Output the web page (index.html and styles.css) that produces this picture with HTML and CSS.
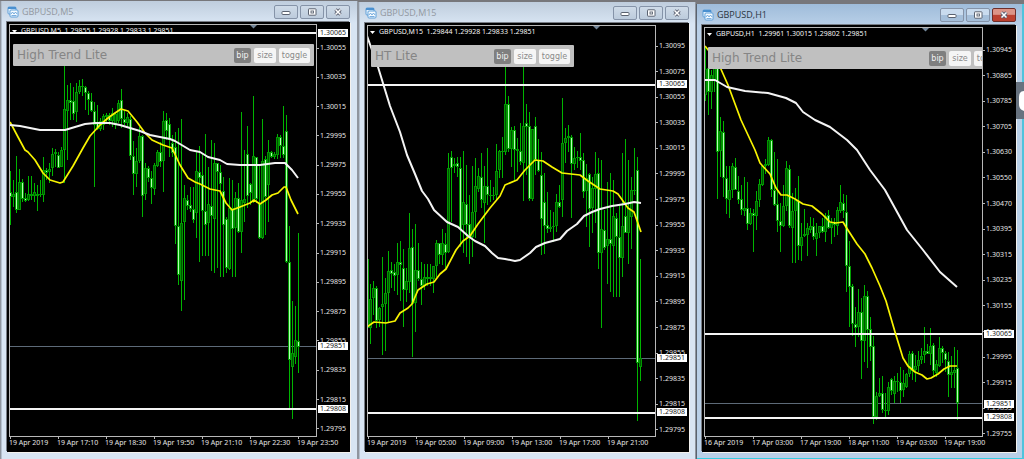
FILE: index.html
```html
<!DOCTYPE html>
<html lang="en">
<head>
<meta charset="utf-8">
<title>GBPUSD charts</title>
<link rel="stylesheet" href="styles.css">
</head>
<body>
<svg class="defs" aria-hidden="true">
  <symbol id="i-chart" viewBox="0 0 12 12">
    <rect x="1" y="1" width="8" height="7" rx="1" fill="#e8f4ff" stroke="#5f9fd8"/>
    <path d="M1 2h8" stroke="#4a90d0" stroke-width="2"/>
    <rect x="3" y="4" width="8" height="7" rx="1" fill="#f4faff" stroke="#5f9fd8"/>
    <path d="M4 8l1.5-2L7 8l1.500-2L10 8M4.500 9.500h5" fill="none" stroke="#5a9ad6" stroke-width=".8"/>
  </symbol>
  <symbol id="i-min" viewBox="0 0 10 8"><rect x="1" y="3.500" width="8" height="3" rx=".8" fill="#fff" stroke="#5a6270"/></symbol>
  <symbol id="i-max" viewBox="0 0 10 8"><rect x="1.500" y=".8" width="7.500" height="6.400" rx=".6" fill="#fff" stroke="#5a6270"/><rect x="4" y="3" width="2.500" height="2" fill="#fff" stroke="#5a6270" stroke-width=".9"/></symbol>
  <symbol id="i-close" viewBox="0 0 10 8"><path d="M2.500 1.500l5 5m0-5l-5 5" stroke="#5a5f70" stroke-width="3.200"/><path d="M2.500 1.500l5 5m0-5l-5 5" stroke="#fff" stroke-width="1.500"/></symbol>
</svg>
<main class="desktop">
  <section class="window">
    <header class="titlebar">
      <svg class="app-icon"><use href="#i-chart"/></svg>
      <h2 class="title">GBPUSD,M5</h2>
      <button class="win-btn" aria-label="Minimize"><svg><use href="#i-min"/></svg></button>
      <button class="win-btn" aria-label="Maximize"><svg><use href="#i-max"/></svg></button>
      <button class="win-btn" aria-label="Close"><svg><use href="#i-close"/></svg></button>
    </header>
    <div class="chart">
      <div class="plot">
        <p class="quote">GBPUSD,M5&nbsp; 1.29855 1.29928 1.29833 1.29851</p>
        <svg class="canvas" id="m5" viewBox="10 25 306 411" preserveAspectRatio="none"></svg>
        <div class="panel">
          <span class="panel-name">High Trend Lite</span>
          <button class="chip chip-on">bip</button><button class="chip">size</button><button class="chip chip-wide">toggle</button>
        </div>
      </div>
      <div class="prices prices-m5">
        <span>1.30055</span><span>1.30035</span><span>1.30015</span><span>1.29995</span><span>1.29975</span><span>1.29955</span><span>1.29935</span><span>1.29915</span><span>1.29895</span><span>1.29875</span><span>1.29855</span><span>1.29835</span><span>1.29815</span><span>1.29795</span>
        <b class="tag" style="top:5px">1.30065</b><b class="tag" style="top:318px">1.29851</b><b class="tag" style="top:381px">1.29808</b>
      </div>
      <div class="times"><span>19 Apr 2019</span><span>19 Apr 17:10</span><span>19 Apr 18:30</span><span>19 Apr 19:50</span><span>19 Apr 21:10</span><span>19 Apr 22:30</span><span>19 Apr 23:50</span></div>
    </div>
  </section>

  <section class="window window-mid">
    <header class="titlebar">
      <svg class="app-icon"><use href="#i-chart"/></svg>
      <h2 class="title">GBPUSD,M15</h2>
      <button class="win-btn" aria-label="Minimize"><svg><use href="#i-min"/></svg></button>
      <button class="win-btn" aria-label="Maximize"><svg><use href="#i-max"/></svg></button>
      <button class="win-btn" aria-label="Close"><svg><use href="#i-close"/></svg></button>
    </header>
    <div class="chart">
      <div class="plot">
        <p class="quote">GBPUSD,M15&nbsp; 1.29844 1.29928 1.29833 1.29851</p>
        <svg class="canvas" id="m15" viewBox="368 26 287 410" preserveAspectRatio="none"></svg>
        <div class="panel panel-short">
          <span class="panel-name">HT Lite</span>
          <button class="chip chip-on">bip</button><button class="chip">size</button><button class="chip chip-wide">toggle</button>
        </div>
      </div>
      <div class="prices prices-m15">
        <span>1.30095</span><span>1.30075</span><span>1.30055</span><span>1.30035</span><span>1.30015</span><span>1.29995</span><span>1.29975</span><span>1.29955</span><span>1.29935</span><span>1.29915</span><span>1.29895</span><span>1.29875</span><span>1.29855</span><span>1.29835</span><span>1.29815</span><span>1.29795</span>
        <b class="tag" style="top:55px">1.30065</b><b class="tag" style="top:329px">1.29851</b><b class="tag" style="top:383px">1.29808</b>
      </div>
      <div class="times"><span>19 Apr 2019</span><span>19 Apr 05:00</span><span>19 Apr 09:00</span><span>19 Apr 13:00</span><span>19 Apr 17:00</span><span>19 Apr 21:00</span></div>
    </div>
  </section>

  <section class="window window-active">
    <header class="titlebar">
      <svg class="app-icon"><use href="#i-chart"/></svg>
      <h2 class="title">GBPUSD,H1</h2>
      <button class="win-btn" aria-label="Minimize"><svg><use href="#i-min"/></svg></button>
      <button class="win-btn" aria-label="Maximize"><svg><use href="#i-max"/></svg></button>
      <button class="win-btn win-close" aria-label="Close"><svg><use href="#i-close"/></svg></button>
    </header>
    <div class="chart">
      <div class="plot">
        <p class="quote">GBPUSD,H1&nbsp; 1.29961 1.30015 1.29802 1.29851</p>
        <svg class="canvas" id="h1" viewBox="705 28 277 408" preserveAspectRatio="none"></svg>
        <div class="panel">
          <span class="panel-name">High Trend Lite</span>
          <button class="chip chip-on">bip</button><button class="chip">size</button><button class="chip chip-wide">toggle</button>
        </div>
      </div>
      <div class="prices prices-h1">
        <span>1.30945</span><span>1.30865</span><span>1.30785</span><span>1.30705</span><span>1.30630</span><span>1.30550</span><span>1.30470</span><span>1.30395</span><span>1.30315</span><span>1.30235</span><span>1.30155</span><span>1.30075</span><span>1.29995</span><span>1.29915</span><span>1.29835</span><span>1.29755</span>
        <b class="tag" style="top:303px">1.30065</b><b class="tag" style="top:373px">1.29851</b><b class="tag" style="top:386px">1.29808</b>
      </div>
      <div class="times"><span>16 Apr 2019</span><span>17 Apr 03:00</span><span>17 Apr 19:00</span><span>18 Apr 11:00</span><span>19 Apr 03:00</span><span>19 Apr 19:00</span></div>
    </div>
    <button class="side-tab" aria-label="Open side panel"><svg viewBox="0 0 8 37"><path d="M8 9C4 9 3 12 3 16v6c0 4 2 6 5 7z" fill="#fff"/></svg></button>
  </section>
</main>
<script src="charts.js"></script>
</body>
</html>
```
FILE: styles.css
```css
* { box-sizing: border-box; }
body {
  margin: 0;
  background: #c9d9ea;
  font-family: "Noto Sans", "Open Sans", sans-serif;
}
.defs { position: absolute; width: 0; height: 0; }
.desktop {
  display: grid;
  grid-template-columns: 358fr 338fr 328fr;
  min-height: 100vh;
  background: #77777b;
}
.window {
  display: flex;
  flex-direction: column;
  padding: 0 8px 7px 7px;
  border-top: 1px solid #77777b;
  background: linear-gradient(#bfcddd, #d8e5f3 22px);
  box-shadow: inset 1px 0 #8f959e, inset 2px 0 #b4c0ce, inset -1px 0 #8f959e;
}
.window-mid { margin-top: 1px; padding-right: 7px; }
.window-active {
  position: relative;
  margin-top: 3px;
  padding-left: 6px;
  background: linear-gradient(#9fbcda, #b9d0e8 22px);
  box-shadow: inset 1px 0 #59626e, inset -2px 0 #4fc3dc, inset 0 -1px #35cfe4;
}
.titlebar {
  display: flex;
  align-items: center;
  height: 21px;
  gap: 2px;
}
.app-icon { width: 12px; height: 12px; }
.title {
  flex: 1;
  margin: 0;
  padding-left: 1px;
  color: #9298a1;
  font: 400 9px/14px "Open Sans", sans-serif;
}
.window-active .title { color: #2c3540; }
.win-btn {
  display: flex;
  align-items: center;
  justify-content: center;
  width: 24px;
  height: 14px;
  padding: 0;
  border: 1px solid #8593a8;
  border-radius: 2px;
  background: linear-gradient(#cfdbe8, #bccbdc);
}
.win-btn svg { width: 10px; height: 8px; }
.window-active .win-btn { background: linear-gradient(#c9dbee 50%, #a5bfda 50%); }
.window-active .win-close { border-color: #6e2f2b; background: linear-gradient(#dc9487 45%, #bc4130 50%); }

.chart {
  flex: 1;
  display: grid;
  grid-template: minmax(0, 1fr) 15px / minmax(0, 1fr) 33px;
  padding: 2px 0 0 2px;
  background: #000;
  box-shadow: -1px -1px #777c84, 1px 1px #f3f1ee;
  color: #e4e4e4;
  font-size: 7px;
  line-height: 8px;
}
.plot {
  position: relative;
  overflow: hidden;
  min-height: 408px;
  border: 1px solid #b8b8b8;
}
.quote {
  position: absolute;
  top: 1px;
  left: 11px;
  margin: 0;
  line-height: 10px;
  white-space: nowrap;
  color: #f4f4f4;
}
.canvas {
  position: absolute;
  inset: 0;
  width: 100%;
  height: 100%;
}
.canvas rect { shape-rendering: crispEdges; }
.panel {
  position: absolute;
  top: 19px;
  left: 3px;
  display: flex;
  align-items: center;
  gap: 3px;
  width: 301px;
  height: 22px;
  padding: 0 4px;
  border-radius: 1px;
  background: #c0c0c0;
  font-family: "DejaVu Sans", sans-serif;
}
.panel-short { width: 203px; }
.panel-name { flex: 1; color: #858585; font-size: 12px; line-height: 16px; }
.chip {
  width: 22px;
  height: 15px;
  padding: 0;
  border: 0;
  border-radius: 2px;
  background: #f5f5f5;
  color: #8a8a8a;
  font: 8px/15px "DejaVu Sans", sans-serif;
}
.chip-on { width: 17px; background: #7f7f7f; color: #f2f2f2; }
.chip-wide { width: 31px; }

.prices {
  position: relative;
  grid-row: 1 / 3;
  grid-column: 2;
  display: flex;
  flex-direction: column;
  justify-content: space-between;
}
.prices-m5 { padding: 20px 0 19px; }
.prices-m15 { padding: 17px 0 18px; }
.prices-h1 { padding: 19px 0 14px; }
.prices span { display: flex; align-items: center; gap: 1px; }
.prices span::before { content: ""; width: 2px; height: 1px; background: #b8b8b8; }
.tag {
  position: absolute;
  left: 1px;
  right: 2px;
  padding-left: 2px;
  background: #fff;
  color: #222;
  font-weight: 400;
  line-height: 8px;
}
.times { display: flex; grid-row: 2; grid-column: 1 / 3; white-space: nowrap; }
.times span { flex: 0 0 48px; padding-top: 1px; }
.times span:last-child { flex: 0 0 auto; }
.times span::before { content: ""; display: block; width: 1px; height: 2px; margin: -1px 0 0 1px; background: #b8b8b8; }
.side-tab {
  position: absolute;
  top: 78px;
  right: 0;
  width: 8px;
  height: 37px;
  padding: 0;
  border: 0;
  background: #67727f;
}
.side-tab svg { display: block; width: 8px; height: 37px; }
```
FILE: charts.js
```js
// Each candle is "high low open close" in canvas units, one every 3 units.
const charts = {
  m5: {
    x: 10, left: 10, right: 316, top: 25, menu: 31, marker: 253,
    levels: [32, 408], bid: 346,
    slow: "10,125 20,126 30,128 40,130 65,130 75,127 85,124 95,123 110,123 120,125 130,128 140,131 150,135 160,137 170,139 175,141 180,144 190,150 200,152 208,157 220,160 227,164 240,165 260,165 275,163 285,163 292,170 298,178",
    fast: "10,122 18,137 25,150 28,152 35,160 43,173 50,180 60,183 63,182 73,166 83,148 90,136 100,125 108,118 115,113 121,109 128,111 137,122 145,133 152,140 163,145 172,148 180,165 188,178 195,182 200,184 210,189 220,191 226,203 232,210 240,207 250,203 254,200 260,204 266,200 272,195 278,193 284,187 286,187 291,200 298,214",
    candles: "171 225 192 197,180 207 197 194,156 213 192 210,169 210 210 182,179 202 182 199,193 202 198 201,176 201 200 194,176 200 194 196,183 202 196 192,185 211 194 196,180 197 195 194,157 202 195 170,168 180 170 173,163 183 172 169,148 176 168 154,149 167 154 152,152 168 155 168,147 167 167 150,66 183 150 109,85 160 111 100,83 120 100 103,87 120 101 114,83 122 112 92,80 94 92 86,79 96 86 87,86 110 87 93,91 115 93 100,93 112 101 111,102 187 111 125,105 130 123 129,118 131 129 121,114 130 125 116,113 123 117 115,113 125 115 121,108 127 121 113,112 129 125 114,100 123 121 103,89 128 100 119,110 125 119 123,113 128 123 117,116 160 119 156,141 195 156 174,148 187 174 161,127 163 161 136,135 217 136 196,163 200 194 168,166 182 168 178,171 204 178 188,163 195 189 165,150 167 166 152,142 167 152 162,111 192 161 121,113 140 120 131,118 157 124 140,135 157 143 153,132 244 147 226,128 285 226 275,119 311 281 223,185 300 222 198,195 210 200 206,187 212 205 209,187 223 209 220,152 238 213 171,146 262 172 178,153 256 175 211,134 256 211 225,167 256 223 204,140 271 206 216,143 273 219 163,163 268 163 172,165 277 172 184,177 277 191 225,217 273 219 268,178 270 269 208,180 277 208 229,192 277 228 198,183 233 198 232,112 253 232 200,150 222 203 199,126 208 154 196,183 205 184 193,96 203 201 156,157 203 157 199,165 239 203 238,119 239 238 161,156 235 159 197,140 222 185 152,151 158 152 157,152 159 157 154,134 159 155 137,135 158 137 146,106 158 146 155,115 263 131 262,226 408 262 360,301 419 367 353,306 364 357 340,233 373 341 347"
  },
  m15: {
    x: 367, left: 368, right: 655, top: 26, menu: 32, marker: 596,
    levels: [84, 412], bid: 358,
    slow: "367,36 378,67 390,106 400,132 407,155 415,174 422,191 428,199 434,210 447,222 458,227 468,236 475,241 485,246 492,253 498,258 505,259 515,261 520,260 530,253 536,247 545,243 560,239 567,231 577,224 584,216 592,212 600,209 612,206 625,204 634,202 641,203",
    fast: "367,327 374,322 386,323 395,321 400,313 408,308 412,304 418,290 427,284 434,282 440,274 446,269 456,250 463,241 470,236 478,224 490,208 500,196 505,185 517,180 525,170 535,160 543,161 552,167 562,173 580,175 588,181 600,189 613,191 618,194 628,208 634,212 641,232",
    candles: "259 328 259 328,284 344 328 299,281 315 298 288,286 328 288 321,307 327 320 308,257 355 307 304,278 351 304 293,251 323 293 271,262 288 270 274,264 291 272 276,243 295 275 262,241 301 262 265,249 327 268 290,268 302 290 281,213 293 282 248,229 357 247 304,224 332 303 270,243 281 270 279,262 305 279 286,264 290 286 277,264 286 277 279,264 286 279 277,266 293 279 266,240 277 266 243,243 264 243 255,229 265 255 243,233 270 244 253,153 253 252 168,151 222 157 168,158 173 166 164,157 177 163 167,157 247 168 229,151 253 225 202,165 257 204 225,195 264 224 237,166 257 237 212,158 238 212 186,168 192 189 176,153 208 177 200,166 243 203 186,148 205 186 195,180 202 195 196,187 200 196 195,144 200 195 171,150 178 170 151,137 178 152 151,67 155 152 104,96 152 104 149,127 167 149 130,126 181 130 150,138 172 149 151,123 165 151 162,67 201 163 126,104 175 123 127,112 201 126 199,129 201 199 129,117 175 126 160,139 172 160 171,152 255 175 219,173 254 202 226,192 233 225 229,210 232 229 227,212 242 227 226,194 232 226 202,185 208 202 207,98 217 200 143,128 163 143 138,125 152 136 138,135 218 137 164,147 170 164 158,151 168 158 157,133 170 157 161,153 198 160 192,164 227 191 178,173 247 174 209,177 233 208 188,152 223 189 174,158 269 173 253,160 328 253 229,210 250 230 248,182 284 246 239,173 292 239 244,180 297 246 216,213 297 218 237,205 297 237 258,153 277 258 226,139 233 216 233,160 264 233 208,177 249 217 190,148 195 190 191,157 421 170 363,259 381 367 358"
  },
  h1: {
    x: 705, left: 705, right: 982, top: 28, menu: 34, marker: 925,
    levels: [333, 417], bid: 403,
    slow: "705,80 715,80 727,87 745,91 768,93 786,98 796,103 803,112 815,120 830,127 847,140 857,150 870,170 885,190 907,230 923,250 940,272 957,287",
    fast: "705,46 709,51 720,67 728,85 741,120 755,150 760,163 770,174 776,188 781,195 787,195 795,199 803,204 812,206 822,214 830,222 836,223 843,222 846,227 857,244 865,254 872,268 880,286 886,301 895,332 903,358 908,366 915,372 922,375 927,379 931,378 938,374 944,369 950,366 957,366",
    candles: "47 101 95 69,61 115 68 92,70 109 92 75,50 92 80 66,50 199 60 152,117 177 151 131,121 197 132 178,166 214 178 199,166 218 200 190,163 198 190 166,158 190 167 190,176 204 191 200,185 215 199 210,177 216 211 208,182 230 208 224,208 225 224 213,209 252 213 216,191 230 216 201,179 207 200 184,168 186 185 166,159 174 166 164,137 166 165 140,139 197 140 190,152 206 190 205,159 232 204 221,203 252 221 226,185 227 226 206,161 211 206 168,165 228 169 226,193 263 228 211,188 263 211 200,176 260 201 246,223 261 246 237,209 237 236 234,223 256 235 228,217 233 230 226,218 240 226 237,223 256 239 233,226 238 233 226,218 233 226 232,213 242 232 216,210 229 215 228,218 244 228 223,218 237 222 225,207 235 226 210,185 213 211 202,194 218 203 211,195 292 212 266,241 327 266 287,284 336 286 324,307 347 324 328,289 337 327 312,298 379 312 341,285 362 341 296,291 368 296 330,317 361 329 347,336 424 346 417,392 420 417 396,378 397 396 393,376 413 393 410,393 417 411 410,382 415 411 387,378 395 379 391,376 403 394 381,373 392 382 381,367 403 382 391,370 397 390 383,373 388 387 374,351 377 374 354,351 380 353 371,355 382 370 366,351 372 366 360,348 364 360 356,327 363 355 351,344 354 351 354,328 365 354 346,343 377 345 371,360 377 373 364,337 367 366 348,346 363 348 353,351 372 353 360,352 397 361 375,356 388 375 372,347 388 373 370,350 420 368 403"
  }
};

function add(svg, name, attrs) {
  const el = document.createElementNS("http://www.w3.org/2000/svg", name);
  for (const key in attrs) el.setAttribute(key, attrs[key]);
  svg.appendChild(el);
}
function box(svg, x, y, width, height, fill) {
  add(svg, "rect", { x, y, width, height: Math.max(height, 1), fill });
}

for (const id in charts) {
  const c = charts[id];
  const svg = document.getElementById(id);
  const width = c.right - c.left;

  box(svg, c.left, c.bid, width, 1, "#5d6a78");
  c.candles.split(",").forEach((row, i) => {
    const [high, low, open, close] = row.split(" ").map(Number);
    const x = c.x + i * 3;
    const top = Math.min(open, close);
    const size = Math.abs(open - close);
    box(svg, x, high, 1, low - high, "#00b400");
    box(svg, x - 1, top, 3, size, close < open ? "#009600" : "#009c00");
    if (size > 2) box(svg, x, top + 1, 1, size - 2, close < open ? "#005400" : "#b4ffb4");
  });
  for (const y of c.levels) box(svg, c.left, y, width, 2, "#f4f4f4");
  add(svg, "polyline", { points: c.fast, fill: "none", stroke: "#f8f400", "stroke-width": 1.700, "stroke-linejoin": "round" });
  add(svg, "polyline", { points: c.slow, fill: "none", stroke: "#f4f4f4", "stroke-width": 2, "stroke-linejoin": "round" });

  const menuX = c.left + 2;
  add(svg, "path", { d: `M${menuX} ${c.menu - 1}h5l-2.500 3z`, fill: "#fff" });
  add(svg, "path", { d: `M${c.marker - 3} ${c.top}h7l-3.500 3.500z`, fill: "#74879a" });
}
```
